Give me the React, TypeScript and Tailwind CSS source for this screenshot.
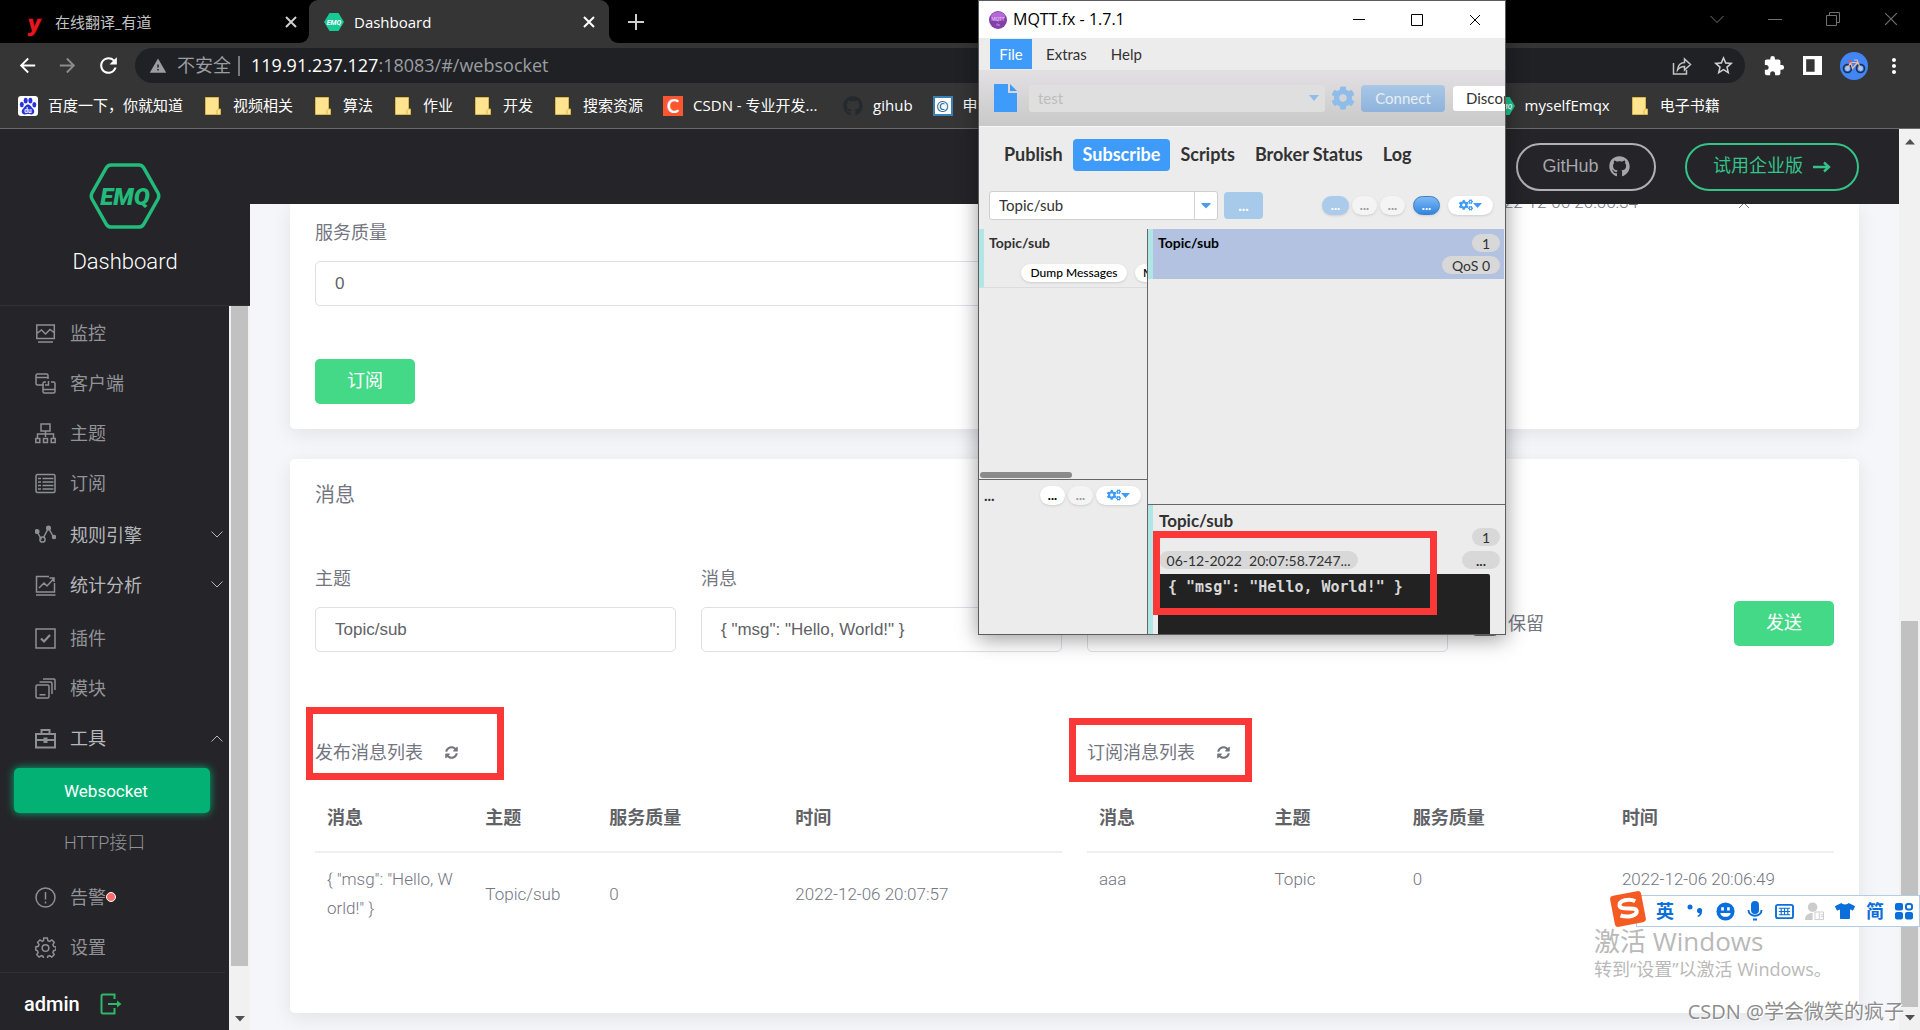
import React from "react";
import { FaCog, FaCogs, FaGithub, FaSyncAlt, FaTshirt, FaCaretDown } from "react-icons/fa";
import { MdArrowBack, MdArrowForward, MdExtension, MdMoreVert, MdRefresh, MdStarBorder, MdWarning } from "react-icons/md";

type Kids = { children?: React.ReactNode };

/* ---------- shared drawings ---------- */

function EmqBadge() {
  return (
    <svg viewBox="0 0 20 20" className="size-5 shrink-0" aria-hidden="true">
      <path d="M5.500 1h9L20 10l-5.500 9h-9L0 10z" fill="#16c995" />
      <text x="10" y="12.500" fontSize="7" fontWeight="700" fontStyle="italic" textAnchor="middle" fill="#fff" fontFamily="Roboto, sans-serif">EMQ</text>
    </svg>
  );
}

function Folder() {
  return (
    <svg viewBox="0 0 20 20" className="size-5 shrink-0" aria-hidden="true">
      <path d="M2.500 1.500h13v11.500h2v5.500h-15z" fill="#ffe48f" stroke="#dcb64a" />
      <path d="M14 18.500v-4l1.500-1.500" fill="none" stroke="#dcb64a" />
    </svg>
  );
}

function Paw() {
  return (
    <svg viewBox="0 0 20 20" className="size-5 shrink-0" aria-hidden="true">
      <rect width="20" height="20" rx="3" fill="#fff" />
      <g fill="#2a32dc">
        <ellipse cx="3.800" cy="8.500" rx="2" ry="2.700" />
        <ellipse cx="7.700" cy="4.600" rx="2" ry="2.900" />
        <ellipse cx="12.400" cy="4.600" rx="2" ry="2.900" />
        <ellipse cx="16.300" cy="8.700" rx="2" ry="2.700" />
        <path d="M10 8.500c2.500 0 3 2.500 5 4.200 2.200 2 1.500 5.600-1.600 5.800-1.500.1-2-.4-3.400-.4s-2 .5-3.400.4c-3-.2-3.800-3.800-1.600-5.800 2-1.700 2.500-4.200 5-4.200z" />
      </g>
      <text x="10" y="16.800" fontSize="6.500" fontWeight="700" textAnchor="middle" fill="#fff" fontFamily="Roboto, sans-serif">du</text>
    </svg>
  );
}

function Cross({ className }: { className: string }) {
  return (
    <svg viewBox="0 0 12 12" className={className} fill="none" stroke="currentColor" aria-hidden="true">
      <path d="M1 1l10 10M11 1L1 11" />
    </svg>
  );
}

/* ---------- browser chrome ---------- */

function TabStrip() {
  return (
    <div className="flex h-[43px] bg-black">
      <div className="w-[309px] bg-[#353535]">
        <div className="flex h-full items-center rounded-br-[9px] bg-black pr-[12px] pl-7 text-[15px] text-[#c4c4c4]">
          <span className="w-[27px] -skew-x-6 font-['Noto_Sans'] text-[22px] leading-5 font-black text-[#e8141e]">y</span>
          <span className="flex-1 pt-0.5">在线翻译_有道</span>
          <button aria-label="关闭标签页"><Cross className="size-3 stroke-2 text-[#d0d0d0]" /></button>
        </div>
      </div>
      <div className="w-[300px] bg-black">
        <div className="flex h-full items-center gap-2.5 rounded-t-[9px] bg-[#353535] pr-[14px] pl-[15px] text-[15px] text-white">
          <EmqBadge />
          <span className="flex-1 pt-0.5">Dashboard</span>
          <button aria-label="关闭标签页"><Cross className="size-3 stroke-2" /></button>
        </div>
      </div>
      <div className="flex-1 bg-[#353535]">
        <div className="flex h-full items-center rounded-bl-[9px] bg-black pl-[19px] text-[#cfcfcf]">
          <button aria-label="新建标签页">
            <svg viewBox="0 0 16 16" className="size-4" fill="none" stroke="currentColor" strokeWidth="2"><path d="M8 0v16M0 8h16" /></svg>
          </button>
          <div className="ml-auto flex h-full items-center gap-[44px] pr-[22px] pb-1.5 text-[#707070]">
            <button aria-label="搜索标签页"><svg viewBox="0 0 14 14" className="size-[14px]" fill="none" stroke="currentColor"><path d="M.5 4L7 10.500 13.500 4" /></svg></button>
            <button aria-label="最小化"><svg viewBox="0 0 14 14" className="size-[14px]" fill="none" stroke="currentColor"><path d="M0 7.500h14" /></svg></button>
            <button aria-label="还原"><svg viewBox="0 0 14 14" className="size-[14px]" fill="none" stroke="currentColor"><path d="M.5 3.500h10v10h-10zM3.500 3V.5h10v10H11" /></svg></button>
            <button aria-label="关闭"><Cross className="size-[14px]" /></button>
          </div>
        </div>
      </div>
    </div>
  );
}

function AddressRow() {
  return (
    <div className="flex items-center pt-[5px] pr-3.5 pl-4 text-white">
      <div className="flex w-[119px] items-center gap-[17px]">
        <button aria-label="后退"><MdArrowBack size={23} /></button>
        <button aria-label="前进" className="text-[#8c8c8c]"><MdArrowForward size={23} /></button>
        <button aria-label="重新加载"><MdRefresh size={25} /></button>
      </div>
      <div className="flex h-[35px] flex-1 items-center rounded-full bg-[#202125] px-3.5 text-[18px] text-[#9a9da1]">
        <MdWarning size={18} className="mr-2.5 shrink-0" />
        <span>不安全</span>
        <span className="mr-2 ml-[7px] h-5 w-0.5 bg-[#77797c]" />
        <span className="ml-[3px] flex-1"><span className="text-white">119.91.237.127</span>:18083/#/websocket</span>
        <button aria-label="分享" className="mr-5 text-[#c4c4c4]">
          <svg viewBox="0 0 20 20" className="size-5" fill="none" stroke="currentColor" strokeWidth="1.500">
            <path d="M1.500 7v11h13v-4M5.500 14c.5-5 3-7.300 7-7.500V3l6 5.500-6 5.500v-3.500c-3 0-5 .8-7 3.500z" />
          </svg>
        </button>
        <button aria-label="收藏" className="-mr-1 text-[#cfcfcf]"><MdStarBorder size={23} /></button>
      </div>
      <div className="flex items-center gap-[18px] pl-[18px]">
        <button aria-label="扩展程序"><MdExtension size={22} /></button>
        <button aria-label="侧边栏">
          <svg viewBox="0 0 18 18" className="size-[19px]"><path d="M0 0h18v18H0zM3 3v12h8V3z" fill="#fff" fillRule="evenodd" /></svg>
        </button>
        <button aria-label="用户" className="flex size-7 items-center justify-center rounded-full bg-[#4285f4]">
          <svg viewBox="0 0 24 16" className="w-6" fill="none">
            <circle cx="5.500" cy="10.500" r="4" stroke="#1d2f4c" strokeWidth="1.600" />
            <circle cx="18.500" cy="10.500" r="4" stroke="#1d2f4c" strokeWidth="1.600" />
            <circle cx="5.500" cy="10.500" r="2.400" fill="#a8c7e8" />
            <circle cx="18.500" cy="10.500" r="2.400" fill="#a8c7e8" />
            <path d="M5.500 10.500l3-6h7l-5 6-2-6M18.500 10.500L15 2h-3" stroke="#f0b7a0" strokeWidth="1.200" />
            <path d="M6 3.500h4" stroke="#e3503e" strokeWidth="1.600" />
          </svg>
        </button>
        <button aria-label="菜单" className="-ml-1"><MdMoreVert size={24} /></button>
      </div>
    </div>
  );
}

function Bookmark({ icon, label }: { icon: React.ReactNode; label: string }) {
  return (
    <a href="#bookmark" className="flex items-center gap-2.5 whitespace-nowrap">
      {icon}
      {label}
    </a>
  );
}

function Bookmarks() {
  return (
    <div className="flex h-[46px] items-center gap-5 border-b border-[#696969] pl-[18px] text-[15px] text-white">
      <Bookmark icon={<Paw />} label="百度一下，你就知道" />
      {["视频相关", "算法", "作业", "开发", "搜索资源"].map((t) => (
        <Bookmark key={t} icon={<Folder />} label={t} />
      ))}
      <div className="w-40">
        <Bookmark
          icon={<span className="flex size-5 items-center justify-center bg-[#fc5531] font-['Lato'] text-[19px] leading-5 font-bold">C</span>}
          label="CSDN - 专业开发..."
        />
      </div>
      <Bookmark icon={<FaGithub size={20} className="text-[#24292e]" />} label="gihub" />
      <div className="w-[542px]">
        <Bookmark
          icon={<span className="flex size-5 items-center justify-center border-2 border-[#3d7fb0] bg-white text-[15px] leading-4 font-bold text-[#2d6c9e]">©</span>}
          label="申请书"
        />
      </div>
      <Bookmark icon={<EmqBadge />} label="myselfEmqx" />
      <Bookmark icon={<Folder />} label="电子书籍" />
    </div>
  );
}

/* ---------- dashboard sidebar ---------- */

function NavIcon({ children }: Kids) {
  return (
    <svg viewBox="0 0 21 21" className="size-[21px] shrink-0" fill="none" stroke="#8f9094" strokeWidth="1.500" aria-hidden="true">
      {children}
    </svg>
  );
}

const icons = {
  monitor: <NavIcon><path d="M1.800 2h17.500v13.500H1.800zM3 19h15M2.500 10l4-3 4 4 4.500-4.500 4 3" /></NavIcon>,
  clients: <NavIcon><path d="M9 12H2.500a1.500 1.500 0 0 1-1.500-1.500v-8A1.500 1.500 0 0 1 2.500 1h9A1.500 1.500 0 0 1 13 2.500V6M1 4.500h12M11 9H9.500A1.500 1.500 0 0 0 8 10.500v8A1.500 1.500 0 0 0 9.500 20h9a1.500 1.500 0 0 0 1.500-1.500v-8A1.500 1.500 0 0 0 18.500 9H16M8 16.500h12M10 12h3.500V8" /></NavIcon>,
  topics: <NavIcon><path d="M6 1h9v7H6zM10.500 8v6M2.500 15v-4h16v4M.8 15.500h4v4h-4zM8.500 15.500h4v4h-4zM16.200 15.500h4v4h-4z" /></NavIcon>,
  subs: <NavIcon><rect x="1" y="1.500" width="19" height="18" rx="1.500" /><path d="M3 5.500h3M7.500 5.500h11M3 9h3M7.500 9h11M3 12.500h3M7.500 12.500h11M3 16h3M7.500 16h11" /></NavIcon>,
  rules: <NavIcon><path d="M2 6.500l4.500 8M8.500 12.500l5-9.500 5 9" /><circle cx="2" cy="6.500" r="1.800" fill="#8f9094" /><circle cx="7.500" cy="14.500" r="2.600" /><circle cx="13.500" cy="3" r="1.800" fill="#8f9094" /><circle cx="19" cy="12" r="1.500" fill="#8f9094" /></NavIcon>,
  stats: <NavIcon><path d="M14 1.500H1.500V17h18V8M1 20h19.500M4 13l5-5 3 3 6.500-7M14.500 3h4.500v4" /></NavIcon>,
  plugins: <NavIcon><path d="M1 1h19v19H1z" /><path d="M6 10.500l3 3 6-6.500" strokeWidth="2.200" /></NavIcon>,
  modules: <NavIcon><rect x="1" y="7" width="13" height="13" rx="1.500" /><path d="M4.500 4H15.500a1.500 1.500 0 0 1 1.500 1.500V16M8 1h11a1 1 0 0 1 1 1v10M4.500 16.800h6" /></NavIcon>,
  tools: <NavIcon><path d="M1 6h19v13.500H1zM6.500 6V2h8v4M1 12h19" strokeWidth="2" /><path d="M8.500 9.500h4V15h-4z" fill="#8f9094" stroke="none" /></NavIcon>,
  alarm: <NavIcon><circle cx="10.500" cy="10.500" r="9.500" /><path d="M10.500 5v7.500M10.500 14.500v2" /></NavIcon>,
  settings: <NavIcon><path d="M8.700 1h3.600l.6 2.600 1.700.7 2.300-1.400 2.400 2.500-1.400 2.200.7 1.800 2.400.5v3.200l-2.400.6-.7 1.700 1.300 2.300-2.400 2.400-2.200-1.400-1.800.7-.6 2.600H8.700l-.6-2.600-1.700-.7-2.300 1.400-2.300-2.400 1.300-2.300-.7-1.700L.8 13V9.900l2.500-.6.7-1.700-1.400-2.300L5 2.900l2.200 1.400 1.300-.7z" /><circle cx="10.500" cy="11" r="3.300" /></NavIcon>,
};

function NavItem({ icon, label, chevron, bright, dot }: { icon: React.ReactNode; label: string; chevron?: "up" | "down"; bright?: boolean; dot?: boolean }) {
  return (
    <a href="#menu" className={`flex h-[50px] items-center pr-[6px] pl-[35px] ${bright ? "text-[#b6b7bb]" : "text-[#929397]"}`}>
      {icon}
      <span className="ml-3.5">{label}</span>
      {dot && <span className="size-2.5 rounded-full border border-white bg-[#ff6d6d]" />}
      {chevron && (
        <svg viewBox="0 0 12 12" className={`ml-auto size-3 ${chevron === "up" ? "rotate-180" : ""}`} fill="none" stroke="currentColor">
          <path d="M.5 2.500L6 8l5.500-5.500" />
        </svg>
      )}
    </a>
  );
}

function Sidebar() {
  return (
    <aside className="flex w-[250px] shrink-0 flex-col bg-[#252429] text-[18px]">
      <div className="flex h-[177px] shrink-0 flex-col items-center border-b border-[#313035] pt-[34px]">
        <svg viewBox="0 0 72 66" className="h-[66px] w-[72px]" aria-label="EMQ">
          <path d="M22 2h28q3 0 4.500 2.500L69 30q1.500 3 0 6L54.500 61.500Q53 64 50 64H22q-3 0-4.500-2.500L3 36q-1.500-3 0-6L17.500 4.500Q19 2 22 2z" fill="none" stroke="#22bb7a" strokeWidth="3.500" />
          <text x="36" y="41.500" fontSize="24" fontWeight="900" fontStyle="italic" textAnchor="middle" fill="#22bb7a" fontFamily="Roboto, sans-serif">EMQ</text>
        </svg>
        <span className="mt-[17px] text-[22px] leading-8 font-light text-white">Dashboard</span>
      </div>
      <div className="flex min-h-0 flex-1">
        <div className="flex flex-1 flex-col">
          <nav className="pt-0.5">
            <NavItem icon={icons.monitor} label="监控" />
            <NavItem icon={icons.clients} label="客户端" />
            <NavItem icon={icons.topics} label="主题" />
            <NavItem icon={icons.subs} label="订阅" />
            <div className="my-0.5">
              <NavItem icon={icons.rules} label="规则引擎" chevron="down" bright />
              <NavItem icon={icons.stats} label="统计分析" chevron="down" bright />
            </div>
            <div className="my-[3px]">
              <NavItem icon={icons.plugins} label="插件" />
              <NavItem icon={icons.modules} label="模块" />
              <NavItem icon={icons.tools} label="工具" chevron="up" bright />
            </div>
            <div className="my-[5px] flex flex-col gap-1 pr-[19px] pl-3.5">
              <a href="#websocket" className="flex h-[45px] items-center rounded-[5px] bg-[#02b173] pt-0.5 pl-[50px] text-[17px] text-white shadow-[0_0_8px_#02b173]">Websocket</a>
              <a href="#http" className="flex h-[50px] items-center pl-[50px] font-light text-[#929397]">HTTP接口</a>
            </div>
            <NavItem icon={icons.alarm} label="告警" dot />
            <NavItem icon={icons.settings} label="设置" />
          </nav>
          <div className="mr-1 flex flex-1 items-center gap-5 border-t border-[#313035] pt-1 pl-6 text-[20px] font-medium text-white">
            admin
            <button aria-label="退出">
              <svg viewBox="0 0 22 22" className="size-[22px]" fill="none" stroke="#2fb868" strokeWidth="2">
                <path d="M14.500 6V1.500H3q-1.500 0-1.500 1.500v16q0 1.500 1.500 1.500h11.500V15M8 11h12" /><path d="M17 7.500l4.500 3.500-4.500 3.500z" fill="#2fb868" stroke="none" />
              </svg>
            </button>
          </div>
        </div>
        <div className="flex w-[21px] flex-col bg-[#f1f1f1] px-0.5 pb-2">
          <div className="flex-1 bg-[#c1c1c1]" />
          <div className="flex h-14 items-end justify-center"><DownArrow /></div>
        </div>
      </div>
    </aside>
  );
}

function DownArrow() {
  return <svg viewBox="0 0 10 6" className="h-1.5 w-2.5"><path d="M0 0h10L5 5.500z" fill="#505050" /></svg>;
}

/* ---------- dashboard content ---------- */

function Field({ id, label, value }: { id: string; label: string; value: string }) {
  return (
    <div>
      <label htmlFor={id} className="flex h-7 items-center">{label}</label>
      <input id={id} defaultValue={value} className="mt-[15px] block h-[45px] w-full rounded-[5px] border border-[#dcdfe6] bg-white px-[19px] font-['Liberation_Sans','Noto_Sans_CJK_SC',sans-serif] text-[17px] text-[#606266]" />
    </div>
  );
}

function GreenButton({ children }: Kids) {
  return <button className="h-[45px] w-[100px] rounded-[5px] bg-[#43d986] pb-[3px] text-[18px] text-white">{children}</button>;
}

function MessageTable({ title, widths, row, middle }: { title: string; widths: string[]; row: string[]; middle?: boolean }) {
  return (
    <section>
      <h3 className="flex h-7 items-center gap-[22px]">
        {title}
        <button aria-label="刷新"><FaSyncAlt size={13} /></button>
      </h3>
      <table className="mt-[13px] w-full table-fixed border-collapse text-left">
        <colgroup>{widths.map((w, i) => <col key={i} style={{ width: w }} />)}</colgroup>
        <thead>
          <tr className="h-[73px] border-b-2 border-[#efefef] text-[#606266]">
            {["消息", "主题", "服务质量", "时间"].map((h) => <th key={h} className="px-3 pt-1 font-bold">{h}</th>)}
          </tr>
        </thead>
        <tbody>
          <tr className={middle ? "align-middle" : "align-top"}>
            {row.map((c, i) => <td key={i} className="px-3 py-3 text-[17px] leading-[29px] font-light break-all">{c}</td>)}
          </tr>
        </tbody>
      </table>
    </section>
  );
}

function Content() {
  return (
    <main className="flex flex-1 flex-col gap-[30px] overflow-hidden bg-[#f5f6fa] px-10 text-[18px] text-[#73757f]">
      <section className="rounded-b-[5px] bg-white px-[25px] pb-[25px] shadow-[0_5px_20px_rgba(0,0,0,0.08)]">
        <div className="-mt-4 flex h-[30px] items-center justify-end gap-[100px] pr-[84px] text-[17px] font-light">
          <span>2022-12-06 20:06:34</span>
          <button aria-label="删除"><Cross className="size-3" /></button>
        </div>
        <div className="grid grid-cols-2 gap-[25px]">
          <Field id="qos-sub" label="服务质量" value="0" />
        </div>
        <div className="mt-[53px] flex"><GreenButton>订阅</GreenButton></div>
      </section>
      <section className="rounded-[5px] bg-white px-[25px] pt-[21px] pb-[78px] shadow-[0_5px_20px_rgba(0,0,0,0.08)]">
        <h2 className="flex h-[30px] items-center text-[20px]">消息</h2>
        <div className="mt-[54px] grid grid-cols-4 gap-[25px]">
          <Field id="topic" label="主题" value="Topic/sub" />
          <Field id="message" label="消息" value={'{ "msg": "Hello, World!" }'} />
          <Field id="qos-pub" label="服务质量" value="0" />
          <div className="flex items-center justify-between pt-[31px]">
            <label className="flex items-center gap-[11px]"><input type="checkbox" className="size-6" />保留</label>
            <GreenButton>发送</GreenButton>
          </div>
        </div>
        <div className="mt-[86px] grid grid-cols-2 gap-[25px]">
          <MessageTable title="发布消息列表" middle widths={["21.2%", "16.6%", "24.9%", "37.3%"]} row={['{ "msg": "Hello, World!" }', "Topic/sub", "0", "2022-12-06 20:07:57"]} />
          <MessageTable title="订阅消息列表" widths={["23.5%", "18.5%", "28%", "30%"]} row={["aaa", "Topic", "0", "2022-12-06 20:06:49"]} />
        </div>
      </section>
    </main>
  );
}

function Dashboard() {
  return (
    <div className="flex min-h-0 flex-1 font-['Roboto','Noto_Sans_CJK_SC',sans-serif]">
      <Sidebar />
      <div className="flex min-w-0 flex-1 flex-col">
        <header className="flex h-[75px] shrink-0 items-center justify-end gap-[29px] bg-[#252429] pr-10 font-['Liberation_Sans','Noto_Sans_CJK_SC',sans-serif] text-[18px]">
          <a href="#github" className="flex h-12 w-[140px] items-center justify-center gap-2.5 rounded-full border-2 border-[#b1b1b5] text-[#a6a6aa]">
            GitHub <FaGithub size={21} />
          </a>
          <a href="#enterprise" className="flex h-12 w-[174px] items-center justify-center gap-2.5 rounded-full border-2 border-[#34c388] text-[#34c388]">
            试用企业版
            <svg viewBox="0 0 18 12" className="w-[18px]" fill="none" stroke="currentColor" strokeWidth="2.400"><path d="M0 6h16M11 1.500L16 6l-5 4.500" /></svg>
          </a>
        </header>
        <Content />
      </div>
      <div className="flex w-[21px] shrink-0 flex-col items-center bg-[#f1f1f1] py-2">
        <svg viewBox="0 0 10 6" className="mt-0.5 h-1.5 w-2.5"><path d="M0 5.500h10L5 0z" fill="#505050" /></svg>
        <div className="flex-1" />
        <div className="h-[386px] w-[17px] bg-[#c1c1c1]" />
        <div className="mt-2 mb-px"><DownArrow /></div>
      </div>
    </div>
  );
}

/* ---------- MQTT.fx window ---------- */

function Pill({ tone, children, label }: Kids & { tone: string; label: string }) {
  return <button aria-label={label} className={`flex h-[19px] items-center justify-center rounded-full text-[13px] leading-none font-bold shadow-sm ${tone}`}>{children}</button>;
}

function GearPill() {
  return (
    <Pill label="选项" tone="w-[45px] bg-white text-[#3e9bf9]">
      <FaCogs size={14} />
      <svg viewBox="0 0 9 5" className="h-[5px] w-[9px]"><path d="M0 0h9L4.500 5z" fill="currentColor" /></svg>
    </Pill>
  );
}

function Badge({ children, className = "" }: Kids & { className?: string }) {
  return <span className={`flex h-[18px] items-center justify-center rounded-full bg-[#d8d8d8] text-[14px] ${className}`}>{children}</span>;
}

function MqttWindow() {
  return (
    <div className="absolute top-0 left-[978px] flex h-[635px] w-[528px] flex-col overflow-hidden border border-[#5c5c5c] bg-[#ececec] font-['Lato','Noto_Sans_CJK_SC',sans-serif] text-[15px] text-[#323232] shadow-[0_4px_20px_rgba(0,0,0,0.4)]">
      <div className="flex h-[37px] shrink-0 items-center bg-white pr-6 pl-2.5 font-['Open_Sans',sans-serif] text-black">
        <svg viewBox="0 0 18 18" className="size-[18px]">
          <circle cx="9" cy="9" r="9" fill="#8340a8" />
          <ellipse cx="9" cy="5.500" rx="7" ry="4.500" fill="#b469d6" />
          <text x="9" y="9.500" fontSize="5" textAnchor="middle" fill="#e6c8f4" fontFamily="Roboto, sans-serif">MQTT</text>
          <text x="9" y="14.500" fontSize="4" textAnchor="middle" fill="#e6c8f4" fontFamily="Roboto, sans-serif">fx</text>
        </svg>
        <span className="ml-1.5 flex-1 pb-px text-[16px]">MQTT.fx - 1.7.1</span>
        <div className="flex items-center gap-[46px]">
          <button aria-label="最小化"><svg viewBox="0 0 12 12" className="size-3" fill="none" stroke="currentColor"><path d="M0 5.500h12" /></svg></button>
          <button aria-label="最大化"><svg viewBox="0 0 12 12" className="size-3" fill="none" stroke="currentColor"><path d="M.5.5h11v11H.5z" /></svg></button>
          <button aria-label="关闭"><Cross className="size-3" /></button>
        </div>
      </div>
      <div className="flex h-8 shrink-0 items-center pl-[11px]">
        <button className="h-[30px] w-[42px] bg-[#3e9bf9] text-white">File</button>
        <button className="ml-3.5">Extras</button>
        <button className="ml-6">Help</button>
      </div>
      <div className="flex h-[57px] shrink-0 items-center border-b border-[#f8f8f8] bg-linear-to-b from-[#e3e0e3] to-[#c9c9c9] pl-[15px]">
        <svg viewBox="0 0 23 28" className="h-7 w-[23px] shrink-0"><path d="M0 0h14v9h9v19H0zM16 0v7h7z" fill="#3e9bf9" /></svg>
        <button className="ml-3 flex h-[27px] w-[296px] shrink-0 items-center justify-between rounded-[3px] bg-[#e0dfe0] px-[9px] pr-1.5 text-[#bdbdbd]">
          test
          <svg viewBox="0 0 10 6" className="h-1.5 w-2.5"><path d="M0 0h10L5 6z" fill="#8fbdea" /></svg>
        </button>
        <FaCog size={24} className="mx-[6px] shrink-0 text-[#8fbdea]" />
        <button className="h-[27px] w-[84px] shrink-0 rounded bg-linear-to-b from-[#a9c7e6] to-[#8eb3db] text-[#e6eef6]">Connect</button>
        <button className="ml-2 h-[25px] shrink-0 rounded-[3px] bg-white px-[13px]">Disconnect</button>
      </div>
      <div className="flex h-[55px] shrink-0 items-center pl-[15px] text-[18px] font-bold">
        <button className="h-8 px-2.5">Publish</button>
        <button className="h-8 rounded bg-[#3e9bf9] px-2.5 text-white">Subscribe</button>
        <button className="h-8 px-2.5">Scripts</button>
        <button className="h-8 px-2.5">Broker Status</button>
        <button className="h-8 px-2.5">Log</button>
      </div>
      <div className="flex h-[47px] shrink-0 items-center px-2.5 pr-3 pb-px">
        <div className="flex h-[29px] w-[229px] items-center rounded-[3px] border border-[#cfcfcf] bg-white">
          <input aria-label="订阅主题" defaultValue="Topic/sub" className="h-full min-w-0 flex-1 px-[9px]" />
          <button aria-label="展开" className="flex h-full w-[23px] items-center justify-center border-l border-[#d4d4d4] text-[#4a9bea]"><FaCaretDown size={16} /></button>
        </div>
        <button aria-label="订阅" className="ml-1.5 h-[27px] w-[39px] rounded bg-[#a7c9ea] font-bold text-white">...</button>
        <div className="ml-auto flex items-center gap-2">
          <div className="flex gap-[3px]">
            <Pill label="QoS0" tone="w-[27px] bg-[#abcbeb] text-white">...</Pill>
            <Pill label="QoS1" tone="w-[25px] bg-[#f4f4f4] text-[#9a9a9a]">...</Pill>
            <Pill label="QoS2" tone="w-[25px] bg-[#f4f4f4] text-[#9a9a9a]">...</Pill>
          </div>
          <Pill label="自动滚动" tone="w-[27px] border border-[#3b7fc4] bg-linear-to-b from-[#7db9f5] to-[#2f86e0] text-white">...</Pill>
          <GearPill />
        </div>
      </div>
      <div className="flex min-h-0 flex-1">
        <div className="flex w-[169px] shrink-0 flex-col overflow-hidden border-r border-[#666]">
          <div className="flex h-[59px] shrink-0 flex-col justify-between border-b border-l-5 border-b-[#dcdcdc] border-l-[#b0e6e6] pt-[3px] pb-[5px] pl-[5px]">
            <span className="text-[14px] font-bold">Topic/sub</span>
            <div className="flex gap-2 pl-8 text-[12px] font-medium text-black">
              <button className="h-[18px] w-[106px] shrink-0 rounded-full bg-white leading-[18px] shadow-sm">Dump Messages</button>
              <button className="h-[18px] shrink-0 rounded-full bg-white px-2 leading-[18px] shadow-sm">Mute</button>
            </div>
          </div>
          <div className="flex h-[192px] shrink-0 items-end border-b border-[#666] pb-px pl-px"><span className="h-1.5 w-[92px] rounded-full bg-[#8a8a8a]" /></div>
          <div className="flex items-center gap-[3px] pt-1 pr-1.5 pl-[5px]">
            <span className="mr-auto font-bold">...</span>
            <Pill label="扫描" tone="w-[25px] bg-white text-black">...</Pill>
            <Pill label="停止" tone="w-[25px] bg-[#f4f4f4] text-[#9a9a9a]">...</Pill>
            <GearPill />
          </div>
        </div>
        <div className="flex flex-1 flex-col">
          <div className="mr-px flex h-[50px] shrink-0 justify-between border-l-5 border-[#b0e6e6] bg-[#b2c2e0] pt-[5px] pr-1 pl-[5px]">
            <span className="text-[14px] leading-[18px] font-bold text-black">Topic/sub</span>
            <div className="flex flex-col items-end gap-1"><Badge className="w-7">1</Badge><Badge className="w-[58px]">QoS 0</Badge></div>
          </div>
          <div className="h-[226px] shrink-0 border-b border-[#666]" />
          <div className="flex flex-1 flex-col border-l-5 border-[#b0e6e6]">
            <div className="flex justify-between pt-1 pr-[5px] pl-1.5">
              <span className="text-[17px] leading-6 font-bold">Topic/sub</span>
              <Badge className="mt-[19px] w-7">1</Badge>
            </div>
            <div className="mt-[5px] flex justify-between pr-[5px] pl-1.5">
              <Badge className="w-[199px] whitespace-pre">06-12-2022  20:07:58.7247...</Badge>
              <Badge className="w-[38px] font-bold">...</Badge>
            </div>
            <pre className="mt-[5px] mr-[15px] ml-[5px] flex-1 rounded-t-[2px] bg-[#222] px-2.5 py-0.5 font-['DejaVu_Sans_Mono',monospace] text-[15px] leading-[22px] font-bold text-[#d8d8d8]">{'{ "msg": "Hello, World!" }'}</pre>
          </div>
        </div>
      </div>
    </div>
  );
}

/* ---------- floating overlays ---------- */

function InputMethodBar() {
  return (
    <div className="absolute top-[891px] right-0 flex h-10 items-center">
      <svg viewBox="0 0 40 40" className="z-10 -mr-3 size-10 pb-1">
        <g transform="rotate(-11 20 20)">
          <rect x="2.500" y="2.500" width="35" height="35" rx="4" fill="#f45a22" />
          <path d="M29.500 13C24 8.500 11.500 8.500 11.500 14.500c0 6.500 17.500 3.500 17.500 9.500 0 5.500-11.500 5.500-18.500 1.500" fill="none" stroke="#fff" strokeWidth="4.500" />
        </g>
      </svg>
      <div className="flex h-8 items-center gap-[11px] border border-[#b5cde4] bg-white pr-1.5 pl-[19px] text-[18px] font-bold text-[#0a6edb]">
        <span>英</span>
        <svg viewBox="0 0 20 18" className="h-[18px] w-5" fill="currentColor"><circle cx="5" cy="5" r="2.500" /><path d="M12 8.500a2.600 2.600 0 1 1 5 1c0 3-1.500 4.500-4 5.500l-.6-1c1.500-.8 2.100-1.600 2.200-2.700A2.600 2.600 0 0 1 12 8.500z" /></svg>
        <svg viewBox="0 0 20 20" className="size-[19px]"><circle cx="10" cy="10" r="9.500" fill="currentColor" /><path d="M5.500 5.500h2.800v3.500H5.500zM11.700 5.500h2.800v3.500h-2.800zM4.500 11.500h11c-.6 5.500-10.400 5.500-11 0z" fill="#fff" /></svg>
        <svg viewBox="0 0 18 20" className="h-5 w-[18px]" fill="none" stroke="currentColor" strokeWidth="2"><rect x="6" y="1" width="6" height="11" rx="3" fill="currentColor" /><path d="M2.500 9c0 7.500 13 7.500 13 0M7 18.500h4" /></svg>
        <svg viewBox="0 0 20 18" className="h-[17px] w-[19px]" fill="none" stroke="currentColor"><rect x="1" y="2" width="18" height="14" rx="2" strokeWidth="2" /><path d="M4 5.500h12M4 9h12M4 12.500h12M6.500 5v7M10 5v7M13.500 5v7" strokeWidth="1.200" /></svg>
        <svg viewBox="0 0 20 20" className="size-[19px]" fill="#ccc"><circle cx="8" cy="5.500" r="5" /><path d="M0 19c0-5 3-7.500 8-7.500V19z" /><path d="M10.500 10.500h9v8h-9z" fill="#fff" stroke="#ccc" /><path d="M15 11v7M16.500 13.500H19M16.500 15.500H19" stroke="#ccc" /></svg>
        <FaTshirt size={20} />
        <span>简</span>
        <svg viewBox="0 0 18 18" className="size-[18px]" fill="currentColor"><rect x="0" y="1" width="8" height="7.500" rx="2" /><rect x="0" y="10" width="8" height="7.500" rx="2" /><rect x="10" y="10" width="8" height="7.500" rx="2" /><rect x="11" y="2" width="6" height="5.500" rx="2" fill="none" stroke="currentColor" strokeWidth="2" /></svg>
      </div>
    </div>
  );
}

export default function App() {
  return (
    <div className="relative flex h-screen flex-col overflow-hidden bg-[#353535] font-['Open_Sans','Noto_Sans_CJK_SC',sans-serif]">
      <TabStrip />
      <AddressRow />
      <Bookmarks />
      <Dashboard />

      <MqttWindow />
      <div className="pointer-events-none absolute top-[707px] left-[306px] h-[73px] w-[198px] border-7 border-[#fb3838]" />
      <div className="pointer-events-none absolute top-[718px] left-[1069px] h-16 w-[183px] border-7 border-[#fb3838]" />
      <div className="pointer-events-none absolute top-[531px] left-[1153px] h-[84px] w-[284px] border-7 border-[#fb3838]" />

      <div className="absolute top-[923px] right-[84px] w-[242px] text-[#b9b9b9]">
        <p className="text-[26px] leading-9">激活 Windows</p>
        <p className="text-[18px] leading-5 whitespace-nowrap">转到“设置”以激活 Windows。</p>
      </div>
      <InputMethodBar />
      <p className="absolute right-4 bottom-1 text-[20px] leading-7 whitespace-nowrap text-[#8d8d8d] [text-shadow:1px_1px_0_#fff]">CSDN @学会微笑的疯子</p>
    </div>
  );
}
